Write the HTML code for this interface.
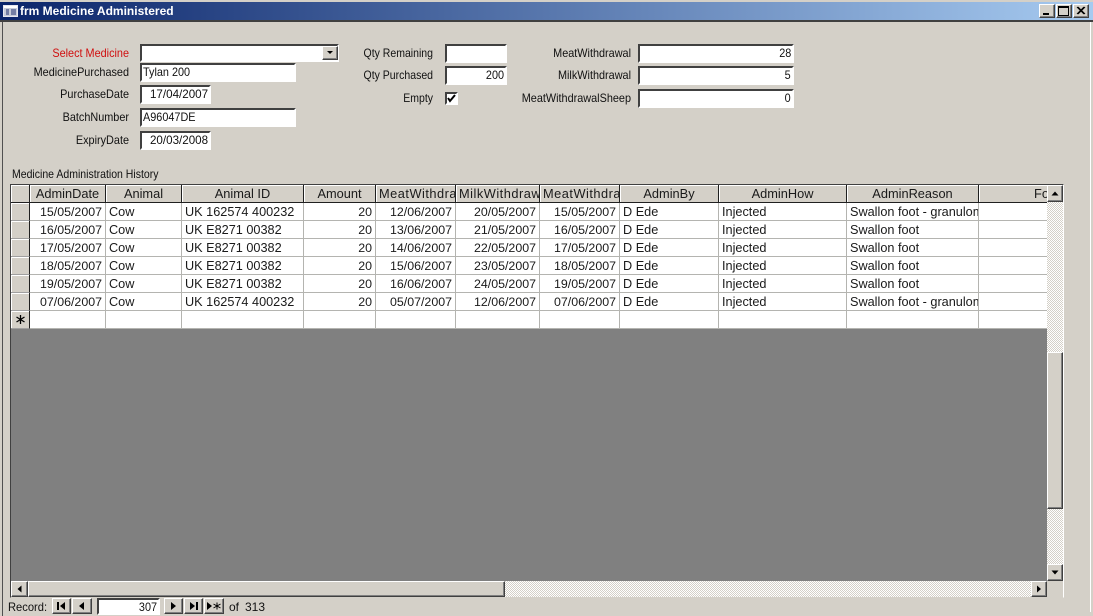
<!DOCTYPE html>
<html><head><meta charset="utf-8"><title>frm Medicine Administered</title>
<style>
html,body{margin:0;padding:0}
body{width:1093px;height:616px;overflow:hidden;position:relative;background:#d4d0c8;font:12px/16px "Liberation Sans",Arial,sans-serif;color:#111}
div{position:absolute;box-sizing:border-box}
.l{text-align:right;white-space:nowrap;height:16px;transform:scaleX(.905);transform-origin:100% 50%}
.q{transform:scaleX(.875)}
.f{background:#fff;border:2px solid;border-color:#404040 #fff #fff #404040;white-space:nowrap;padding:0 1px;line-height:14px}
.f span{display:inline-block;transform:scaleX(.905);transform-origin:0 50%}
.f.r span{transform-origin:100% 50%}
.f.d span{transform:scaleX(.967)}
.r{text-align:right}
.btn{background:#d4d0c8;border:1px solid;border-color:#fff #404040 #404040 #fff;box-shadow:inset -1px -1px 0 #808080}
.dith{background:conic-gradient(#fff 25%,#d4d0c8 0 50%,#fff 0 75%,#d4d0c8 0) 0 0/2px 2px}
svg{position:absolute;left:0;top:0;display:block}
table{position:absolute;left:11px;top:185px;border-collapse:separate;border-spacing:0;table-layout:fixed;width:1036px;background:#fff}
td,th{box-sizing:border-box;height:18px;padding:0 1px 0 3px;overflow:hidden;white-space:nowrap;border-right:1px solid #b4b4b0;border-bottom:1px solid #b4b4b0;font-weight:normal;font-size:12.700px;line-height:16px;color:#1a1a1a}
td{padding-top:1px;vertical-align:top}
th{background:#d4d0c8;border-right:1px solid #202020;border-bottom:1px solid #202020;text-align:center;box-shadow:inset 1px 1px 0 #fff;padding:0 1px;font-size:12.800px}
td.s{background:#d4d0c8;border-right:1px solid #202020;border-bottom:1px solid #a0a0a0;box-shadow:inset 1px 1px 0 #fff;padding:0;text-align:center}
td.n{text-align:right;padding-right:3px;font-size:12.400px}
td:last-child,th:last-child{border-right:0}
th.sm{text-align:left;padding-left:3px;letter-spacing:.5px}
</style></head><body>

<!-- title bar -->
<div style="left:0;top:2px;width:1093px;height:18px;background:linear-gradient(90deg,#0a246a 0,#a6caf0 100%)"></div>
<svg width="20" height="20" style="left:3px;top:3px"><rect x="1" y="3" width="13" height="10" fill="#c8ccd8"/><rect x="1" y="3" width="13" height="2" fill="#fff"/><rect x="0.500" y="2.500" width="14" height="11" fill="none" stroke="#e8e8f0"/><path d="M3 7h3M3 9h3M3 11h3M8 7h5M8 9h5M8 11h5" stroke="#203070"/></svg>
<div style="left:20px;top:3px;font-weight:bold;color:#fff;font-size:12px;line-height:16px;white-space:nowrap">frm Medicine Administered</div>
<div class="btn" style="left:1039px;top:4px;width:16px;height:14px"></div>
<div style="left:1043px;top:13px;width:6px;height:2px;background:#000"></div>
<div class="btn" style="left:1056px;top:4px;width:16px;height:14px"></div>
<div style="left:1058px;top:6px;width:11px;height:10px;border:1px solid #000;border-top-width:2px"></div>
<div class="btn" style="left:1073px;top:4px;width:16px;height:14px"></div>
<svg width="16" height="14" style="left:1073px;top:4px"><path d="M4 3l7 7M5 3l7 7M11 3l-7 7M12 3l-7 7" stroke="#000"/></svg>

<!-- window frame -->
<div style="left:0;top:20px;width:1093px;height:2px;background:#404040"></div>
<div style="left:2px;top:22px;width:1px;height:594px;background:#505050"></div>
<div style="left:1090px;top:22px;width:1px;height:590px;background:#fff"></div>

<!-- left fields -->
<div class="l" style="left:0;width:129px;top:45px;color:#d01010">Select Medicine</div>
<div class="f" style="left:140px;top:44px;width:199px;height:18px"></div>
<div class="btn" style="left:322px;top:46px;width:16px;height:14px"></div>
<svg width="16" height="14" style="left:322px;top:46px"><path d="M5 5h6l-3 3z" fill="#000"/></svg>

<div class="l" style="left:0;width:129px;top:64px">MedicinePurchased</div>
<div class="f" style="left:140px;top:63px;width:156px;height:19px"><span>Tylan 200</span></div>
<div class="l" style="left:0;width:129px;top:86px">PurchaseDate</div>
<div class="f r d" style="left:140px;top:85px;width:71px;height:19px"><span>17/04/2007</span></div>
<div class="l" style="left:0;width:129px;top:109px">BatchNumber</div>
<div class="f" style="left:140px;top:108px;width:156px;height:19px"><span>A96047DE</span></div>
<div class="l" style="left:0;width:129px;top:132px">ExpiryDate</div>
<div class="f r d" style="left:140px;top:131px;width:71px;height:19px"><span>20/03/2008</span></div>

<!-- middle fields -->
<div class="l q" style="left:340px;width:93px;top:45px">Qty Remaining</div>
<div class="f r" style="left:445px;top:44px;width:62px;height:19px"></div>
<div class="l q" style="left:340px;width:93px;top:67px">Qty Purchased</div>
<div class="f r" style="left:445px;top:66px;width:62px;height:19px"><span>200</span></div>
<div class="l q" style="left:340px;width:93px;top:90px">Empty</div>
<div class="f" style="left:445px;top:92px;width:13px;height:13px"></div>
<svg width="13" height="13" style="left:445px;top:92px"><path d="M3 6l2 3 5-6" fill="none" stroke="#000" stroke-width="2"/></svg>

<!-- right fields -->
<div class="l" style="left:500px;width:131px;top:45px">MeatWithdrawal</div>
<div class="f r" style="left:638px;top:44px;width:156px;height:19px"><span>28</span></div>
<div class="l" style="left:500px;width:131px;top:67px">MilkWithdrawal</div>
<div class="f r" style="left:638px;top:66px;width:156px;height:19px"><span>5</span></div>
<div class="l" style="left:500px;width:131px;top:90px">MeatWithdrawalSheep</div>
<div class="f r" style="left:638px;top:89px;width:156px;height:19px"><span>0</span></div>

<div style="left:12px;top:166px;white-space:nowrap;line-height:16px;transform:scaleX(.875);transform-origin:0 50%">Medicine Administration History</div>

<!-- subform -->
<div style="left:10px;top:184px;width:1054px;height:414px;border:1px solid;border-color:#404040 #fff transparent #404040"></div>
<div style="left:11px;top:328px;width:1036px;height:253px;background:#808080"></div>

<table>
<colgroup><col style="width:19px"><col style="width:76px"><col style="width:76px"><col style="width:122px"><col style="width:72px"><col style="width:80px"><col style="width:84px"><col style="width:80px"><col style="width:99px"><col style="width:128px"><col style="width:132px"><col style="width:68px"></colgroup>
<tr><th></th><th>AdminDate</th><th>Animal</th><th>Animal ID</th><th>Amount</th><th class="sm">MeatWithdrawal</th><th class="sm">MilkWithdrawal</th><th class="sm">MeatWithdrawal</th><th>AdminBy</th><th>AdminHow</th><th>AdminReason</th><th style="text-align:left;padding-left:55px">Form</th></tr>
<tr><td class="s"></td><td class="n">15/05/2007</td><td>Cow</td><td>UK 162574 400232</td><td class="n">20</td><td class="n">12/06/2007</td><td class="n">20/05/2007</td><td class="n">15/05/2007</td><td>D Ede</td><td>Injected</td><td>Swallon foot - granuloma</td><td></td></tr>
<tr><td class="s"></td><td class="n">16/05/2007</td><td>Cow</td><td>UK E8271 00382</td><td class="n">20</td><td class="n">13/06/2007</td><td class="n">21/05/2007</td><td class="n">16/05/2007</td><td>D Ede</td><td>Injected</td><td>Swallon foot</td><td></td></tr>
<tr><td class="s"></td><td class="n">17/05/2007</td><td>Cow</td><td>UK E8271 00382</td><td class="n">20</td><td class="n">14/06/2007</td><td class="n">22/05/2007</td><td class="n">17/05/2007</td><td>D Ede</td><td>Injected</td><td>Swallon foot</td><td></td></tr>
<tr><td class="s"></td><td class="n">18/05/2007</td><td>Cow</td><td>UK E8271 00382</td><td class="n">20</td><td class="n">15/06/2007</td><td class="n">23/05/2007</td><td class="n">18/05/2007</td><td>D Ede</td><td>Injected</td><td>Swallon foot</td><td></td></tr>
<tr><td class="s"></td><td class="n">19/05/2007</td><td>Cow</td><td>UK E8271 00382</td><td class="n">20</td><td class="n">16/06/2007</td><td class="n">24/05/2007</td><td class="n">19/05/2007</td><td>D Ede</td><td>Injected</td><td>Swallon foot</td><td></td></tr>
<tr><td class="s"></td><td class="n">07/06/2007</td><td>Cow</td><td>UK 162574 400232</td><td class="n">20</td><td class="n">05/07/2007</td><td class="n">12/06/2007</td><td class="n">07/06/2007</td><td>D Ede</td><td>Injected</td><td>Swallon foot - granuloma</td><td></td></tr>
<tr><td class="s"><svg width="18" height="17" style="position:static"><path d="M9.500 4v9M5.500 6l8 5M13.500 6l-8 5" stroke="#000" stroke-width="1.300"/></svg></td><td></td><td></td><td></td><td></td><td></td><td></td><td></td><td></td><td></td><td></td><td></td></tr>
</table>

<!-- vertical scrollbar -->
<div class="dith" style="left:1047px;top:185px;width:16px;height:396px"></div>
<div class="btn" style="left:1047px;top:185px;width:16px;height:17px"></div>
<svg width="16" height="17" style="left:1047px;top:185px"><path d="M4.500 10.500h7l-3.500-4z" fill="#000"/></svg>
<div class="btn" style="left:1047px;top:352px;width:16px;height:157px"></div>
<div class="btn" style="left:1047px;top:564px;width:16px;height:17px"></div>
<svg width="16" height="17" style="left:1047px;top:564px"><path d="M4.500 6.500h7l-3.500 4z" fill="#000"/></svg>

<!-- horizontal scrollbar -->
<div class="dith" style="left:11px;top:581px;width:1036px;height:16px"></div>
<div class="btn" style="left:11px;top:581px;width:17px;height:16px"></div>
<svg width="17" height="16" style="left:11px;top:581px"><path d="M10.500 4.500v7l-4-3.500z" fill="#000"/></svg>
<div class="btn" style="left:28px;top:581px;width:477px;height:16px"></div>
<div class="btn" style="left:1031px;top:581px;width:16px;height:16px"></div>
<svg width="16" height="16" style="left:1031px;top:581px"><path d="M6 4.500v7l4-3.500z" fill="#000"/></svg>

<!-- record nav -->
<div style="left:8px;top:599px;white-space:nowrap;transform:scaleX(.93);transform-origin:0 50%">Record:</div>
<div class="btn" style="left:52px;top:598px;width:19px;height:16px"></div>
<svg width="19" height="16" style="left:52px;top:598px"><path d="M5 4h2v8H5zM13 4v8l-5-4z" fill="#000"/></svg>
<div class="btn" style="left:72px;top:598px;width:20px;height:16px"></div>
<svg width="20" height="16" style="left:72px;top:598px"><path d="M12 4v8l-5-4z" fill="#000"/></svg>
<div class="f r" style="left:97px;top:598px;width:63px;height:17px"><span>307</span></div>
<div class="btn" style="left:164px;top:598px;width:19px;height:16px"></div>
<svg width="19" height="16" style="left:164px;top:598px"><path d="M7 4v8l5-4z" fill="#000"/></svg>
<div class="btn" style="left:184px;top:598px;width:19px;height:16px"></div>
<svg width="19" height="16" style="left:184px;top:598px"><path d="M6 4v8l5-4zM12 4h2v8h-2z" fill="#000"/></svg>
<div class="btn" style="left:204px;top:598px;width:20px;height:16px"></div>
<svg width="20" height="16" style="left:204px;top:598px"><path d="M3 4v8l5-4z" fill="#000"/><path d="M13 4.500v7M9.500 6l7 4M16.500 6l-7 4" stroke="#000"/></svg>
<div style="left:229px;top:599px;white-space:nowrap">of</div>
<div style="left:245px;top:599px;white-space:nowrap">313</div>
</body></html>
